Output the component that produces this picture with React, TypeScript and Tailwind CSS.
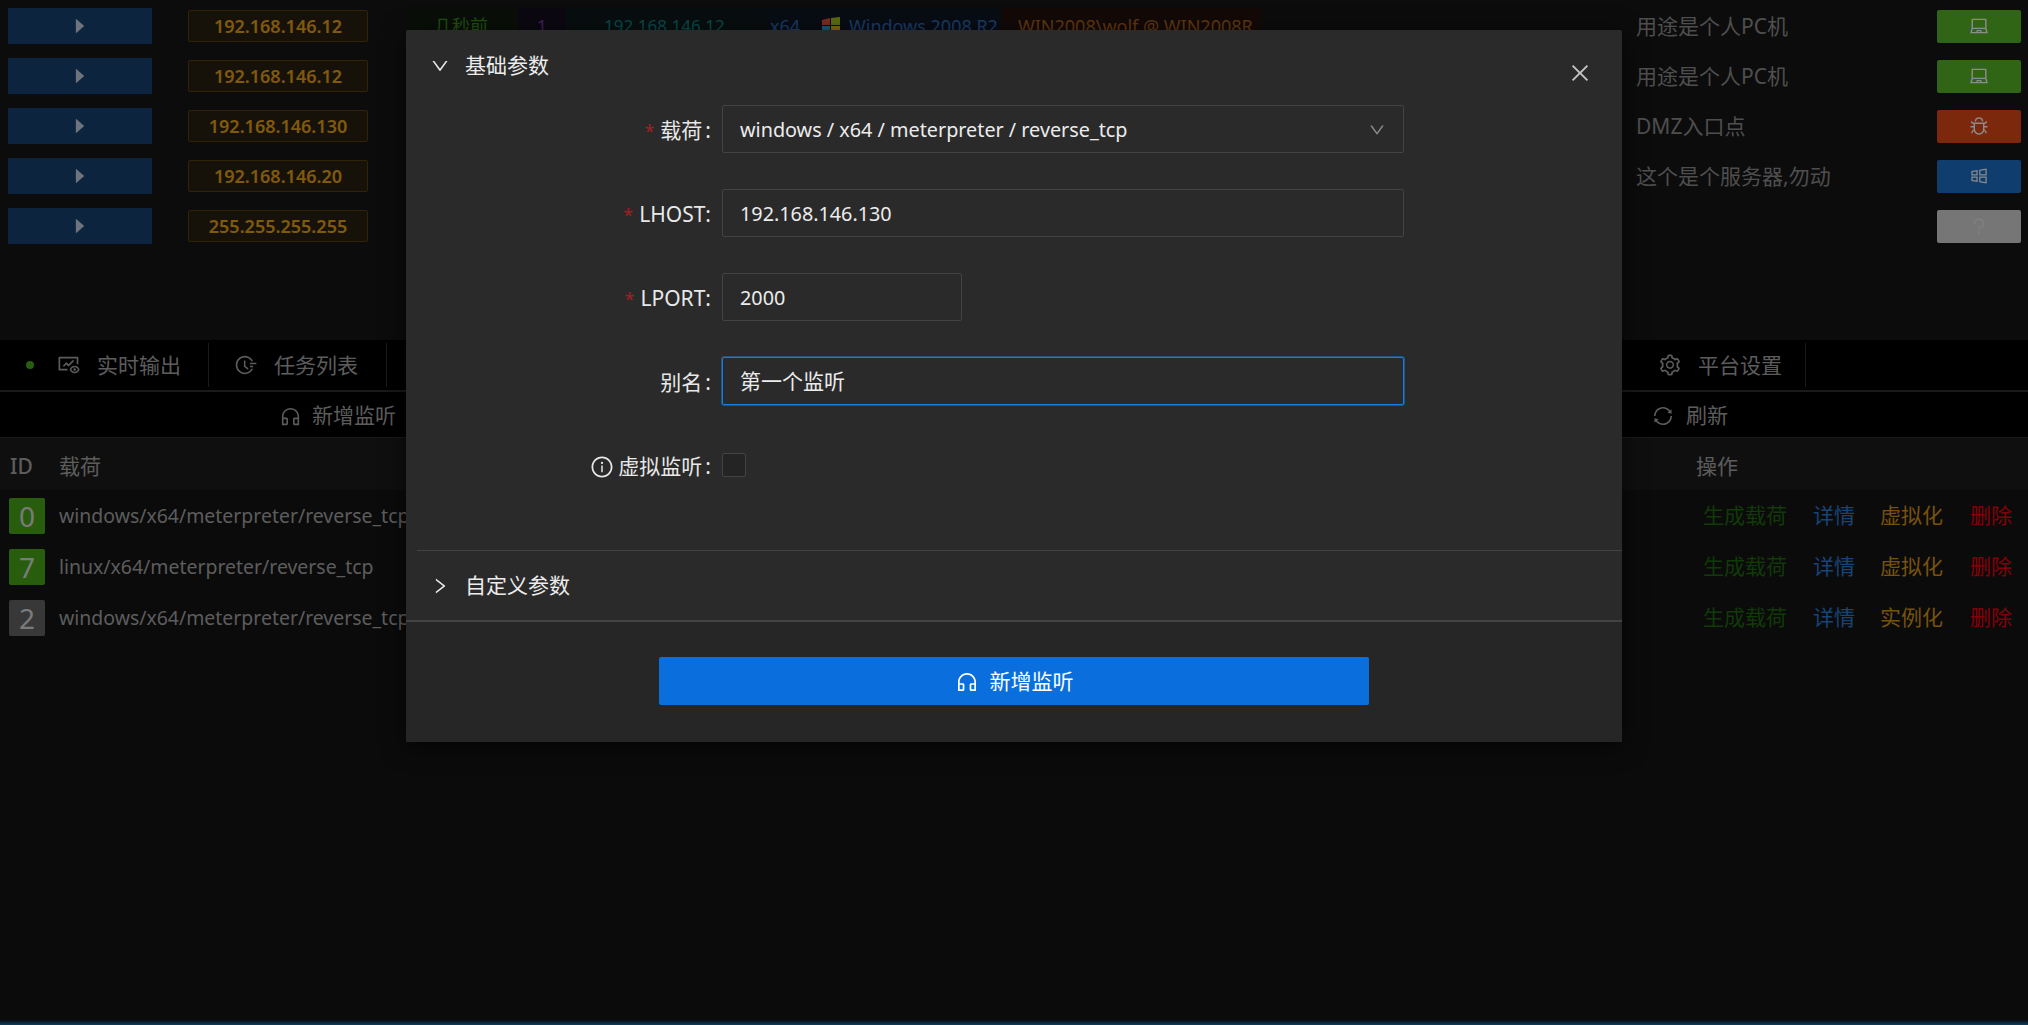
import {
  AiFillCaretRight,
  AiOutlineBug,
  AiOutlineClose,
  AiOutlineCustomerService,
  AiOutlineDown,
  AiOutlineFieldTime,
  AiOutlineFundView,
  AiOutlineInfoCircle,
  AiOutlineLaptop,
  AiOutlineQuestion,
  AiOutlineRight,
  AiOutlineSetting,
  AiOutlineSync,
  AiOutlineWindows,
} from "react-icons/ai";
import type { ReactNode } from "react";

const font = "font-['Noto_Sans','Noto_Sans_CJK_SC',sans-serif]";

const hosts = [
  { ip: "192.168.146.12", note: "用途是个人PC机", kind: "laptop" },
  { ip: "192.168.146.12", note: "用途是个人PC机", kind: "laptop" },
  { ip: "192.168.146.130", note: "DMZ入口点", kind: "bug" },
  { ip: "192.168.146.20", note: "这个是个服务器,勿动", kind: "windows" },
  { ip: "255.255.255.255", note: "", kind: "unknown" },
];

const listeners = [
  { id: 0, color: "bg-[#49aa19]", payload: "windows/x64/meterpreter/reverse_tcp", virt: "虚拟化" },
  { id: 7, color: "bg-[#49aa19]", payload: "linux/x64/meterpreter/reverse_tcp", virt: "虚拟化" },
  { id: 2, color: "bg-[#666666]", payload: "windows/x64/meterpreter/reverse_tcp", virt: "实例化" },
];

function WindowsFlag() {
  return (
    <svg viewBox="0 0 20 20" className="w-[20px] h-[20px] shrink-0">
      <path d="M1 4 9 2v7H1z" fill="#e8503a" />
      <path d="M10 2l9-1v8h-9z" fill="#a8c820" />
      <path d="M1 10h8v7l-8-2z" fill="#2ea8e0" />
      <path d="M10 10h9v9l-9-2z" fill="#f5c915" />
    </svg>
  );
}

function HostIcon({ kind }: { kind: string }) {
  if (kind === "laptop")
    return (
      <div className="w-[84px] h-[33px] rounded-[2px] bg-[#58b828] flex items-center justify-center text-[#fff] text-[20px]">
        <AiOutlineLaptop />
      </div>
    );
  if (kind === "bug")
    return (
      <div className="w-[84px] h-[33px] rounded-[2px] bg-[#e04a18] flex items-center justify-center text-[#fff] text-[20px]">
        <AiOutlineBug />
      </div>
    );
  if (kind === "windows")
    return (
      <div className="w-[84px] h-[33px] rounded-[2px] bg-[#1a70c8] flex items-center justify-center text-[#fff] text-[20px]">
        <AiOutlineWindows />
      </div>
    );
  return (
    <div className="w-[84px] h-[33px] rounded-[2px] bg-[#d8d8d8] flex items-center justify-center text-[#e8e8e8] text-[20px]">
      <AiOutlineQuestion />
    </div>
  );
}

// only the first row peeks out above the dialog
function HostTags() {
  return (
    <div className="flex-1 ml-[40px] h-[36px] flex items-center text-[18px] whitespace-nowrap overflow-hidden">
      <div className="w-[110px] h-full pl-[26px] flex items-center bg-[#121c0f] text-[#3f9416]">几秒前</div>
      <div className="w-[48px] h-full flex items-center justify-center bg-[#161020] text-[#6b3fb0]">1</div>
      <div className="w-[200px] h-full pl-[38px] flex items-center bg-[#0f1b1d] text-[#108a8a] text-[17px]">192.168.146.12</div>
      <div className="w-[50px] h-full pl-[4px] flex items-center bg-[#0f1825] text-[#2f6fc0]">x64</div>
      <div className="w-[185px] h-full pl-[5px] flex items-center gap-[8px] bg-[#0f1825] text-[#2f6fc0]">
        <WindowsFlag />
        Windows 2008 R2
      </div>
      <div className="w-[260px] h-full pl-[17px] flex items-center bg-[#241310] text-[#b5651a]">WIN2008\wolf @ WIN2008R</div>
    </div>
  );
}

function HostRow({ ip, note, kind, first }: { ip: string; note: string; kind: string; first: boolean }) {
  return (
    <div className="h-[50px] flex items-center pl-[8px] pr-[7px]">
      <div className="w-[144px] h-[36px] bg-[#174272] flex items-center justify-center text-[#c6d4e4] text-[20px]">
        <AiFillCaretRight />
      </div>
      <div className="ml-[36px] w-[180px] h-[32px] rounded-[2px] border border-[#59400c] bg-[#2b2111] flex items-center justify-center text-[#e8a317] text-[18px] font-semibold">
        {ip}
      </div>
      {first ? <HostTags /> : <div className="flex-1" />}
      <div className="w-[301px] pt-[2px] text-[21px] text-[#8f8f8f]">{note}</div>
      <HostIcon kind={kind} />
    </div>
  );
}

function Tab({ icon, label, leading }: { icon: ReactNode; label: string; leading?: ReactNode }) {
  return (
    <div className="h-[50px] flex items-center">
      {leading}
      <span className="text-[24px] text-[#a8a8a8]">{icon}</span>
      <span className="ml-[16px] pt-[2px] text-[21px] text-[#a8a8a8]">{label}</span>
    </div>
  );
}

function Field({
  label,
  required,
  info,
  cjk,
  children,
}: {
  label: string;
  required?: boolean;
  info?: boolean;
  cjk?: boolean;
  children: ReactNode;
}) {
  return (
    <div className="flex items-center min-h-[48px]">
      <div className="w-[316px] pr-[11px] pt-[4px] flex items-center justify-end text-[21px] text-[#e8e8e8]">
        {required && <span className="mr-[6px] text-[#a61d24] text-[18px]">*</span>}
        {info && <AiOutlineInfoCircle className="mr-[4px] text-[24px]" />}
        <span>{label}</span>
        <span className={cjk ? "ml-[3px]" : ""}>:</span>
      </div>
      {children}
    </div>
  );
}

function TextBox({ value, className }: { value: string; className: string }) {
  return (
    <div className={`h-[48px] flex items-center px-[17px] pt-[2px] rounded-[2px] border text-[#ececec] ${className}`}>
      {value}
    </div>
  );
}

function ListenerDialog() {
  return (
    <div className="absolute left-[406px] top-[30px] w-[1216px] h-[712px] bg-[#2a2a2a] rounded-[2px] shadow-[0_4px_24px_rgba(0,0,0,0.6)] flex flex-col">
      <AiOutlineClose className="absolute left-[1162px] top-[31px] text-[24px] text-[#c4c4c4]" />
      <div className="h-[72px] pl-[24px] flex items-center text-[21px] text-[#ececec]">
        <AiOutlineDown className="text-[20px] mr-[15px]" />
        基础参数
      </div>
      <div className="pt-[3px] flex flex-col gap-[36px]">
        <Field label="载荷" required cjk>
          <div className="w-[682px] h-[48px] flex items-center justify-between px-[17px] pt-[2px] rounded-[2px] border border-[#434343] text-[19.8px] text-[#ececec]">
            windows / x64 / meterpreter / reverse_tcp
            <AiOutlineDown className="text-[18px] text-[#8c8c8c]" />
          </div>
        </Field>
        <Field label="LHOST" required>
          <TextBox value="192.168.146.130" className="w-[682px] border-[#434343] text-[19.8px]" />
        </Field>
        <Field label="LPORT" required>
          <TextBox value="2000" className="w-[240px] border-[#434343] text-[19.8px]" />
        </Field>
        <Field label="别名" cjk>
          <TextBox
            value="第一个监听"
            className="w-[682px] border-[#177ddc] text-[21px] shadow-[0_0_0_1px_rgba(23,125,220,0.5)]"
          />
        </Field>
        <Field label="虚拟监听" info cjk>
          <div className="w-[24px] h-[24px] rounded-[2px] border border-[#434343] bg-[#242424]" />
        </Field>
      </div>
      <div className="mt-[61px] ml-[11px] h-[70px] border-t border-[#434343] pl-[13px] flex items-center text-[21px] text-[#ececec]">
        <AiOutlineRight className="text-[20px] mr-[15px]" />
        自定义参数
      </div>
      <div className="flex-1 border-t-2 border-[#434343] flex justify-center pt-[35px] bg-[#262626]">
        <div className="w-[710px] h-[48px] pt-[2px] rounded-[2px] bg-[#0a6fdc] flex items-center justify-center gap-[11px] text-[21px] text-white">
          <AiOutlineCustomerService className="text-[24px]" />
          新增监听
        </div>
      </div>
    </div>
  );
}

export default function App() {
  return (
    <div className={`${font} relative h-[1025px] overflow-hidden bg-[#161616] flex flex-col`}>
      <div className="h-[340px] pt-[1px]">
        {hosts.map((h, i) => (
          <HostRow key={i} first={i === 0} {...h} />
        ))}
      </div>

      <div className="h-[52px] bg-black border-b-2 border-[#303030] flex items-center">
        <div className="w-[209px] h-[44px] border-r border-[#303030] flex items-center pl-[26px]">
          <Tab
            icon={<AiOutlineFundView />}
            label="实时输出"
            leading={<span className="w-[8px] h-[8px] rounded-full bg-[#49aa19] mr-[23px]" />}
          />
        </div>
        <div className="w-[178px] h-[44px] border-r border-[#303030] flex items-center pl-[25px]">
          <Tab icon={<AiOutlineFieldTime />} label="任务列表" />
        </div>
        <div className="flex-1" />
        <div className="w-[222px] h-[44px] border-r border-[#303030] flex items-center justify-end pr-[23px] mr-[222px]">
          <Tab icon={<AiOutlineSetting />} label="平台设置" />
        </div>
      </div>

      <div className="h-[46px] pt-[3px] bg-black border-b border-[#303030] flex items-center justify-between pl-[279px] pr-[300px] text-[21px] text-[#a8a8a8]">
        <div className="flex items-center gap-[10px]">
          <AiOutlineCustomerService className="text-[23px]" />
          新增监听
        </div>
        <div className="flex items-center gap-[12px]">
          <AiOutlineSync className="text-[22px]" />
          刷新
        </div>
      </div>

      <div className="h-[52px] pt-[6px] bg-[#1d1d1d] flex items-center pl-[10px] text-[21px] text-[#a8a8a8]">
        <span className="w-[49px] font-medium">ID</span>
        <span className="flex-1">载荷</span>
        <span className="w-[332px]">操作</span>
      </div>

      <div className="flex-1 bg-[#141414]">
        {listeners.map((l) => (
          <div key={l.id} className="h-[51px] flex items-center pl-[9px] text-[19.45px] text-[#a8a8a8]">
            <div className={`${l.color} w-[36px] h-[36px] rounded-[2px] flex items-center justify-center text-[28px] text-[#dfdfdf]`}>
              {l.id}
            </div>
            <span className="flex-1 ml-[14px]">{l.payload}</span>
            <div className="w-[325px] flex items-center text-[21px]">
              <span className="w-[110px] text-[#1f6a10]">生成载荷</span>
              <span className="w-[67px] text-[#2b7cd3]">详情</span>
              <span className="w-[90px] text-[#d89614]">{l.virt}</span>
              <span className="text-[#f0000f]">删除</span>
            </div>
          </div>
        ))}
      </div>
      <div className="h-[5px] bg-linear-to-b from-[#0a1a2a] to-[#1d6fa8]" />

      <div className="absolute inset-0 bg-black/45" />
      <ListenerDialog />
    </div>
  );
}
